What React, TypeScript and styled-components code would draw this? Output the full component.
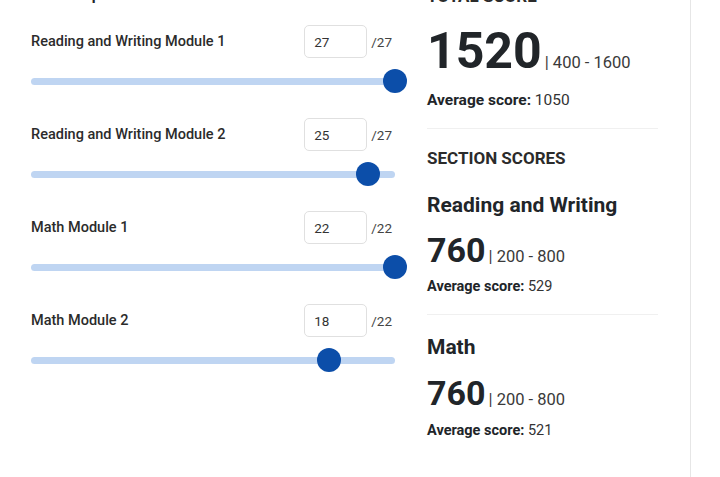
import React from 'react'
import styled, { createGlobalStyle } from 'styled-components'

const GlobalStyle = createGlobalStyle`
  html, body {
    margin: 0;
    padding: 0;
    background: #fff;
    overflow: hidden;
  }
  body {
    font-family: Roboto, "Liberation Sans", Arial, sans-serif;
    color: #212529;
  }
`

const Page = styled.div`
  display: flex;
  align-items: flex-start;
  margin-top: -20px;
`

const InputsColumn = styled.div`
  width: 364px;
  padding: 1px 0 0 31px;
`

const ColumnTitle = styled.h2`
  margin: 0 0 20px;
  padding-left: 4px;
  font-size: 18px;
  line-height: 24px;
  font-weight: 500;
  color: #212529;
`

const ModuleList = styled.div`
  display: flex;
  flex-direction: column;
  gap: 25px;
`

const ModuleRow = styled.div`
  display: flex;
  flex-direction: column;
  gap: 11px;
`

const LabelRow = styled.div`
  display: flex;
  align-items: center;
  justify-content: space-between;
  height: 33px;
  padding-right: 3px;
`

const ModuleLabel = styled.span`
  font-size: 14.5px;
  font-weight: 500;
  color: #2b2b2b;
`

const ScoreEntry = styled.div`
  display: flex;
  align-items: center;
  gap: 4px;
`

const ScoreBox = styled.input`
  box-sizing: border-box;
  width: 63px;
  height: 33px;
  padding: 0 0 0 9px;
  border: 1px solid #e0e0e0;
  border-radius: 5px;
  font-family: inherit;
  font-size: 13.5px;
  color: #333;
  background: #fff;
  outline: none;
`

const MaxLabel = styled.span`
  font-size: 13.5px;
  color: #444;
`

const SliderArea = styled.div`
  position: relative;
  height: 24px;
  display: flex;
  align-items: center;
`

const Track = styled.div`
  width: 100%;
  height: 7px;
  border-radius: 4px;
  background: #bfd5f2;
`

const Thumb = styled.div`
  position: absolute;
  top: 0;
  width: 24px;
  height: 24px;
  margin-left: -12px;
  border-radius: 50%;
  background: #0c4ea9;
`

const ResultsColumn = styled.div`
  width: 231px;
  padding: 6px 32px 0;
  min-height: 520px;
  border-right: 1px solid #e6e6e6;
`

const CapsTitle = styled.div`
  font-size: 17px;
  line-height: 20px;
  font-weight: 700;
  color: #2b2b2b;
`

const ScoreLine = styled.div<{ $size: number }>`
  display: flex;
  align-items: baseline;
  gap: 3px;
  font-size: ${p => p.$size}px;
  line-height: ${p => p.$size}px;
`

const BigNumber = styled.span`
  font-weight: 700;
  color: #212529;
`

const RangeText = styled.span`
  font-size: 16.5px;
  line-height: 1;
  color: #3a3a3a;
`

const Average = styled.div<{ $size: number }>`
  font-size: ${p => p.$size}px;
  line-height: 18px;
  color: #333;

  b {
    font-weight: 700;
    color: #212529;
  }
`

const Divider = styled.hr`
  margin: 0;
  border: none;
  border-top: 1px solid #f0f0f0;
`

const SectionName = styled.div`
  font-size: 21px;
  line-height: 24px;
  font-weight: 700;
  color: #212529;
`

const Spacer = styled.div<{ $h: number }>`
  height: ${p => p.$h}px;
`

const modules = [
  { name: 'Reading and Writing Module 1', value: 27, max: 27 },
  { name: 'Reading and Writing Module 2', value: 25, max: 27 },
  { name: 'Math Module 1', value: 22, max: 22 },
  { name: 'Math Module 2', value: 18, max: 22 },
]

const sections = [
  { name: 'Reading and Writing', score: 760, avg: 529 },
  { name: 'Math', score: 760, avg: 521 },
]

export default function App() {
  return (
    <>
      <GlobalStyle />
      <Page>
        <InputsColumn>
          <ColumnTitle>Your Inputs</ColumnTitle>
          <ModuleList>
            {modules.map(m => (
              <ModuleRow key={m.name}>
                <LabelRow>
                  <ModuleLabel>{m.name}</ModuleLabel>
                  <ScoreEntry>
                    <ScoreBox value={m.value} readOnly />
                    <MaxLabel>/{m.max}</MaxLabel>
                  </ScoreEntry>
                </LabelRow>
                <SliderArea>
                  <Track />
                  <Thumb style={{ left: `${(m.value / m.max) * 100}%` }} />
                </SliderArea>
              </ModuleRow>
            ))}
          </ModuleList>
        </InputsColumn>

        <ResultsColumn>
          <CapsTitle>TOTAL SCORE</CapsTitle>
          <Spacer $h={20} />
          <ScoreLine $size={50}>
            <BigNumber>1520</BigNumber>
            <RangeText>| 400 - 1600</RangeText>
          </ScoreLine>
          <Spacer $h={15} />
          <Average $size={15.5}><b>Average score:</b> 1050</Average>
          <Spacer $h={19} />
          <Divider />
          <Spacer $h={19} />
          <CapsTitle>SECTION SCORES</CapsTitle>
          {sections.map((s, i) => (
            <React.Fragment key={s.name}>
              {i > 0 && (
                <>
                  <Spacer $h={18} />
                  <Divider />
                </>
              )}
              <Spacer $h={i === 0 ? 25 : 20} />
              <SectionName>{s.name}</SectionName>
              <Spacer $h={i === 0 ? 16 : 17} />
              <ScoreLine $size={34}>
                <BigNumber>{s.score}</BigNumber>
                <RangeText>| 200 - 800</RangeText>
              </ScoreLine>
              <Spacer $h={i === 0 ? 11 : 12} />
              <Average $size={14.5}><b>Average score:</b> {s.avg}</Average>
            </React.Fragment>
          ))}
        </ResultsColumn>
      </Page>
    </>
  )
}
